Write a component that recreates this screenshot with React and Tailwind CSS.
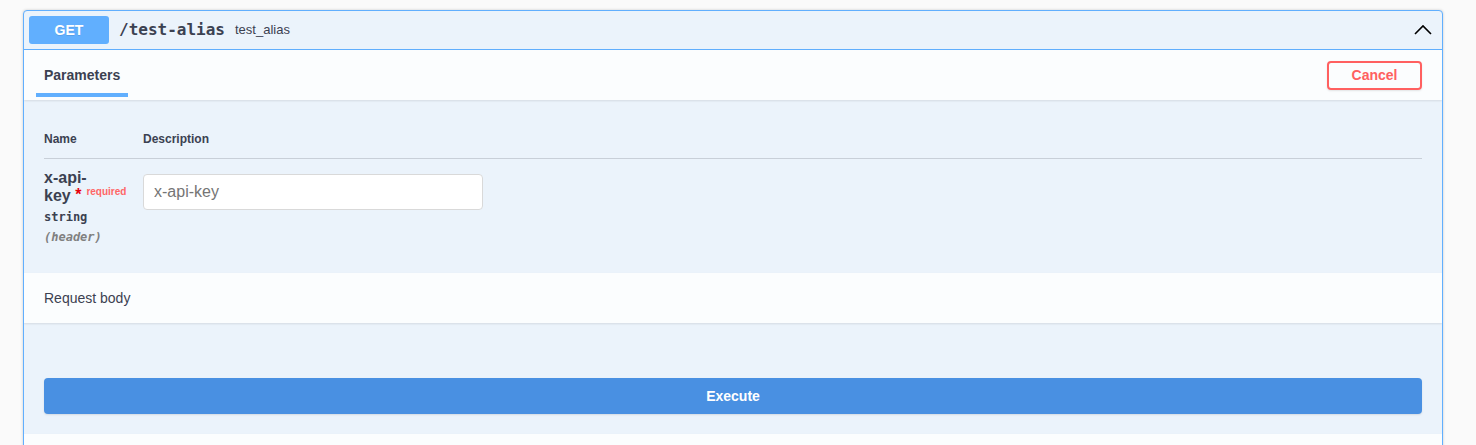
import React from 'react';

const sans = "font-['Liberation_Sans',Arial,sans-serif]";
const mono = "font-['DejaVu_Sans_Mono',monospace]";

function ChevronUp() {
    return (
        <svg width="20" height="20" viewBox="0 0 20 20" className="text-black">
            <path d="M2 14 L10 6 L18 14" fill="none" stroke="currentColor" strokeWidth="1.6" />
        </svg>
    );
}

export default function App() {
    return (
        <div className={`min-h-screen bg-[#fafafa] pt-[10px] ${sans} text-[#3b4151]`}>
            <div className="ml-[23px] w-[1420px] rounded-[4px] border border-[#61affe] bg-[#ebf3fb] shadow-[0_0_3px_rgba(0,0,0,0.19)] overflow-hidden">
                {/* summary */}
                <div className="flex items-center p-[5px] border-b border-[#61affe]">
                    <span className="min-w-[80px] h-[28px] flex items-center justify-center rounded-[3px] bg-[#61affe] text-white text-[14px] font-bold [text-shadow:0_1px_0_rgba(0,0,0,0.1)]">
                        GET
                    </span>
                    <span className={`px-[10px] text-[16px] font-bold ${mono} text-[#3b4151]`}>/test-alias</span>
                    <span className="text-[13px] text-[#3b4151]">test_alias</span>
                    <div className="ml-auto mr-[4px] flex items-center">
                        <ChevronUp />
                    </div>
                </div>

                {/* parameters header */}
                <div className="h-[50px] flex items-center justify-between px-[20px] bg-white/80 shadow-[0_1px_2px_rgba(0,0,0,0.1)]">
                    <div className="relative h-full flex items-center">
                        <h4 className="text-[14px] font-bold text-[#3b4151]">Parameters</h4>
                        <span className="absolute left-[-10%] w-[120%] bottom-[3px] h-[4px] bg-[#61affe]" />
                    </div>
                    <button className="h-[29px] w-[95px] border-2 border-[#ff6060] rounded-[4px] text-[#ff6060] text-[14px] font-bold shadow-[0_1px_2px_rgba(0,0,0,0.1)]">
                        Cancel
                    </button>
                </div>

                {/* parameters table */}
                <div className="px-[20px] pt-[20px] pb-[27px]">
                    <div className="flex h-[39px] items-center border-b border-[#3b4151]/20 text-[12px] font-bold">
                        <div className="w-[99px]">Name</div>
                        <div>Description</div>
                    </div>
                    <div className="flex pt-[10px]">
                        <div className="w-[99px] pr-[10px]">
                            <div className="text-[16px] font-bold leading-[18px]">
                                x-api-key<span className="text-red-600 relative top-[-1px]">&nbsp;*</span>
                                <span className="text-[10px] text-[#ff6666] relative top-[-6px] pl-[5px] font-bold">required</span>
                            </div>
                            <div className={`pt-[1px] text-[12px] font-bold ${mono}`}>string</div>
                            <div className={`pt-[2px] text-[12px] italic font-semibold text-[#808080] ${mono}`}>(header)</div>
                        </div>
                        <div className="pt-[5px]">
                            <input
                                placeholder="x-api-key"
                                className="w-[340px] h-[36px] px-[10px] rounded-[4px] border border-[#d9d9d9] bg-white text-[16px] placeholder:text-[#757575] outline-none"
                            />
                        </div>
                    </div>
                </div>

                {/* request body */}
                <div className="h-[50px] flex items-center px-[20px] bg-white/80 shadow-[0_1px_2px_rgba(0,0,0,0.1)]">
                    <h4 className="text-[14px] text-[#3b4151]">Request body</h4>
                </div>

                {/* execute */}
                <div className="px-[20px] pt-[55px] pb-[20px]">
                    <button className="w-full h-[36px] rounded-[4px] bg-[#4990e2] text-white text-[14px] font-bold shadow-[0_1px_2px_rgba(0,0,0,0.1)]">
                        Execute
                    </button>
                </div>

                {/* responses header */}
                <div className="h-[50px] bg-white/80 shadow-[0_1px_2px_rgba(0,0,0,0.1)]" />
            </div>
        </div>
    );
}
